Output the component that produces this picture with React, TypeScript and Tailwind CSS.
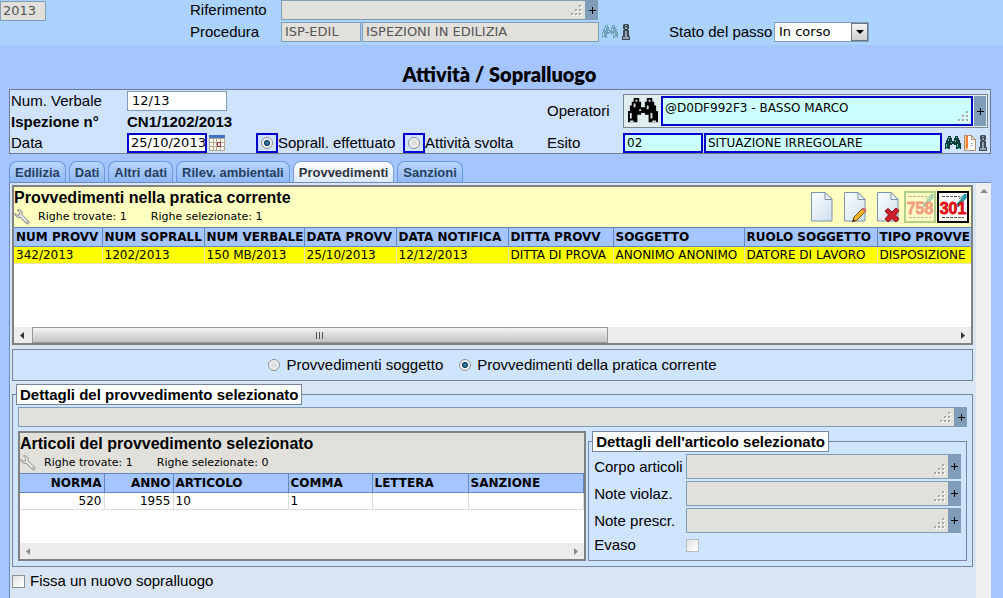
import React from "react";

const SANS = "font-['Liberation_Sans',Arial,sans-serif]";
const VERD = "font-['DejaVu_Sans',Verdana,sans-serif]";

function Grip() {
  return (
    <svg width="12" height="12" viewBox="0 0 12 12" className="pointer-events-none absolute right-1 bottom-1" aria-hidden="true">
      <g fill="#fff">
        <path d="M10 2h2v2h-2zM6 6h2v2H6zM10 6h2v2h-2zM2 10h2v2H2zM6 10h2v2H6zM10 10h2v2h-2z" />
      </g>
      <g fill="#a5a8a5">
        <path d="M9 1h2v2H9zM5 5h2v2H5zM9 5h2v2H9zM1 9h2v2H1zM5 9h2v2H5zM9 9h2v2H9z" />
      </g>
    </svg>
  );
}

function PlusButton({ label }: { label: string }) {
  return (
    <button type="button" aria-label={label} className="flex w-3 shrink-0 items-center justify-center bg-[#7f9db9]">
      <svg width="7" height="7" viewBox="0 0 7 7" aria-hidden="true">
        <path d="M3 0h1v3h3v1H4v3H3V4H0V3h3z" fill="#000" />
      </svg>
    </button>
  );
}

function GrayArea({ id, label, tall }: { id: string; label: string; tall?: boolean }) {
  return (
    <div className={"flex w-full " + (tall ? "h-[25px]" : "h-5")}>
      <div className="relative flex min-w-0 flex-1">
        <textarea
          id={id}
          aria-label={label}
          readOnly
          className="block h-full w-full resize-none overflow-hidden border border-[#7f9db9] bg-[#e1e0db] px-1 text-[12px]"
        />
        <Grip />
      </div>
      <PlusButton label={"Espandi " + label} />
    </div>
  );
}

function Binoculars({ size, body, shine }: { size: number; body: string; shine: string }) {
  return (
    <svg width={size} height={size} viewBox="0 0 16 16" aria-hidden="true">
      <path
        d="M3 1h3v2h1v3h2V3h1V1h3v2h1v2h1v3h1v6h-5v-4H9V9H7v1H5v4H0V8h1V5h1V3h1z"
        fill={body}
      />
      <path d="M4 2h1v1H4zM3 4h1v2H3zM1 9h1v3H1zM11 2h1v1h-1zM10 5h1v2h-1zM12 9h1v3h-1zM6 7h1v1H6zM1 13h2v1H1zM13 13h2v1h-2z" fill={shine} />
    </svg>
  );
}

function InfoIcon() {
  return (
    <svg width="10" height="16" viewBox="0 0 10 16" aria-hidden="true">
      <path d="M3 0h4l1 1v4H7v1h1v6h1v4H1v-4h1V6h1V5H2V1z" fill="#3e4a55" />
      <path d="M4 1h2v1H4zM4 3h2v2H4zM4 7h2v6h2v2H2v-2h2z" fill="#8fa3b3" />
    </svg>
  );
}

function Wrench({ faded }: { faded?: boolean }) {
  return (
    <svg width="16" height="16" viewBox="0 0 16 16" className={faded ? "opacity-80" : ""} aria-hidden="true">
      <path
        d="M3.500.8c2.400-.6 4.700.9 4.800 3.500l-.3 1.300 6.800 6.900c.8 1.600-.9 3-2.300 2.200L6 8c-2.500.9-5-.7-5.200-3.500l2.300 1.800 2.200-.6.500-2.200z"
        fill="#e6e6e6"
        stroke="#7d7d7d"
      />
      <circle cx="13" cy="13" r=".8" fill="#777" />
    </svg>
  );
}

function Page({ children }: { children?: React.ReactNode }) {
  return (
    <svg width="24" height="32" viewBox="0 0 24 32" aria-hidden="true">
      <defs>
        <linearGradient id="sheet" x1="0" y1="0" x2="1" y2="1">
          <stop offset="0" stopColor="#fbfdff" />
          <stop offset="1" stopColor="#cfe0ee" />
        </linearGradient>
      </defs>
      <path d="M1.500 1.500h13.500l7 7v21.500h-20.500z" fill="url(#sheet)" stroke="#7d94ab" />
      <path d="M15 1.500v7h7z" fill="#eef5fb" stroke="#7d94ab" />
      {children}
    </svg>
  );
}

function Stamp({ text, faded }: { text: string; faded?: boolean }) {
  return (
    <svg width="32" height="32" viewBox="0 0 32 32" className={faded ? "opacity-40" : ""} aria-hidden="true">
      <rect x="1" y="1" width="30" height="30" fill={faded ? "#fff8d0" : "#fff"} stroke={faded ? "#3c8c3c" : "#000"} strokeWidth="2" />
      <path d="M5 5.500h18M5 26.500h22" stroke="#555" strokeDasharray="3 1" />
      <path d="M19 14l10-11v4l-8 9zM22 8l6-5" fill="#2aa0a8" stroke="#0f7f88" />
      <text
        x="16"
        y="23"
        textAnchor="middle"
        fontSize="16"
        fontWeight="700"
        fill="#dd1018"
        stroke="#dd1018"
        strokeWidth="0.8"
        fontFamily="'Liberation Sans',sans-serif"
      >
        {text}
      </text>
    </svg>
  );
}

function Arrow({ dir, color }: { dir: "left" | "right" | "up"; color: string }) {
  const d = { left: "M5 1v7L1 4.500z", right: "M3 1v7l4-3.500z", up: "M0 6h8L4 2z" }[dir];
  return (
    <svg width="8" height="9" viewBox="0 0 8 9" aria-hidden="true">
      <path d={d} fill={color} />
    </svg>
  );
}

function HScroll({ thumb }: { thumb?: boolean }) {
  const c = thumb ? "#333" : "#8a8a8a";
  return (
    <div className="flex h-4 shrink-0 bg-[#ececec]">
      <button type="button" aria-label="Scorri a sinistra" className="flex w-[18px] items-center justify-center">
        <Arrow dir="left" color={c} />
      </button>
      <div className="flex flex-1">
        {thumb && (
          <div className="flex w-[62.5%] items-center justify-center gap-[2px] border border-[#979797] bg-linear-to-b from-[#f3f3f3] to-[#c4c4c6]">
            <span className="h-[7px] w-px bg-[#555]" />
            <span className="h-[7px] w-px bg-[#555]" />
            <span className="h-[7px] w-px bg-[#555]" />
          </div>
        )}
      </div>
      <button type="button" aria-label="Scorri a destra" className="flex w-[18px] items-center justify-center">
        <Arrow dir="right" color={c} />
      </button>
    </div>
  );
}

const radioClass =
  "h-3 w-3 shrink-0 appearance-none rounded-full border border-[#8e8f8f] bg-[radial-gradient(circle,#d4d4d4_0,#f4f4f4_70%)] checked:bg-[radial-gradient(circle,#3fa0c4_0,#123c5c_38%,#eef2f4_48%)]";

const checkClass = "h-[13px] w-[13px] shrink-0 appearance-none border bg-linear-to-br from-[#e4e4e4] to-white";

const tabs = ["Edilizia", "Dati", "Altri dati", "Rilev. ambientali", "Provvedimenti", "Sanzioni"];

const provv = [
  ["NUM PROVV", "342/2013"],
  ["NUM SOPRALL", "1202/2013"],
  ["NUM VERBALE", "150 MB/2013"],
  ["DATA PROVV", "25/10/2013"],
  ["DATA NOTIFICA", "12/12/2013"],
  ["DITTA PROVV", "DITTA DI PROVA"],
  ["SOGGETTO", "ANONIMO ANONIMO"],
  ["RUOLO SOGGETTO", "DATORE DI LAVORO"],
  ["TIPO PROVVE", "DISPOSIZIONE"],
];

const articoli = [
  ["NORMA", "520"],
  ["ANNO", "1955"],
  ["ARTICOLO", "10"],
  ["COMMA", "1"],
  ["LETTERA", ""],
  ["SANZIONE", ""],
];

function Counts({ found, selected }: { found: number; selected: number }) {
  return (
    <div className={"flex items-center text-[11px] leading-4 " + VERD}>
      <span>Righe trovate: {found}</span>
      <span className="ml-6">Righe selezionate: {selected}</span>
    </div>
  );
}

export default function App() {
  return (
    <div className={"flex min-h-screen flex-col bg-[#a4c5ff] text-[15px] leading-5 text-black " + SANS}>
      <header className="flex h-[45px] items-start bg-[#acd2ff]">
        <input
          aria-label="Anno"
          readOnly
          value="2013"
          className={"mt-px h-5 w-[46px] border border-[#7f9db9] bg-[#e1e0db] pl-[2px] text-[13px] text-[#555] " + VERD}
        />
        <div className="ml-36 grid grid-cols-[91px_auto] gap-y-[2px]">
          <label htmlFor="rif">Riferimento</label>
          <div className="w-[317px]">
            <GrayArea id="rif" label="Riferimento" />
          </div>
          <label htmlFor="proc">Procedura</label>
          <div className="flex items-center">
            <input
              id="proc"
              readOnly
              value="ISP-EDIL"
              className={"h-5 w-20 border border-[#7f9db9] bg-[#e1e0db] px-[3px] text-[13px] text-[#555] " + VERD}
            />
            <input
              aria-label="Descrizione procedura"
              readOnly
              value="ISPEZIONI IN EDILIZIA"
              className={"ml-px h-5 w-[237px] border border-[#7f9db9] bg-[#e1e0db] px-[3px] text-[13px] text-[#555] " + VERD}
            />
            <button type="button" aria-label="Cerca procedura" className="ml-[3px]">
              <Binoculars size={16} body="#6fa3bf" shine="#c3e2f2" />
            </button>
            <button type="button" aria-label="Informazioni procedura" className="ml-[3px]">
              <InfoIcon />
            </button>
            <label htmlFor="stato" className="mr-1 ml-[38px] w-[101px] whitespace-nowrap">
              Stato del passo
            </label>
            <div className="relative">
              <select
                id="stato"
                className={"block h-5 w-[95px] appearance-none border border-[#7f9db9] bg-white pl-1 text-[13px] leading-4 " + VERD}
              >
                <option>In corso</option>
              </select>
              <span className="pointer-events-none absolute top-px right-px flex h-[18px] w-[17px] items-center justify-center border border-[#6b7784] bg-linear-to-b from-[#f5f5f5] to-[#cfcfcf]">
                <svg width="8" height="4" viewBox="0 0 8 4" aria-hidden="true">
                  <path d="M0 0h8L4 4z" />
                </svg>
              </span>
            </div>
          </div>
        </div>
      </header>

      <h1 className="mt-[17px] mb-[3px] pr-1 text-center font-['Lato',sans-serif] text-[20px] leading-6 font-extrabold">Attività / Sopralluogo</h1>

      <section className="mr-3 ml-[9px] flex border border-[#6f7d90] bg-[#cfe3ff]">
        <div className="w-[537px] shrink-0 pl-px">
          <div className="flex h-[21px] items-center">
            <label htmlFor="verb" className="w-[116px]">
              Num. Verbale
            </label>
            <input id="verb" defaultValue="12/13" className={"h-5 w-[100px] border border-[#7f9db9] bg-white px-1 text-[13px] " + VERD} />
          </div>
          <div className="flex h-[21px] items-center font-bold">
            <span className="w-[116px]">Ispezione n°</span>
            <span className="text-[15px]">CN1/1202/2013</span>
          </div>
          <div className="flex h-[21px] items-center">
            <label htmlFor="data" className="w-[116px]">
              Data
            </label>
            <input
              id="data"
              defaultValue="25/10/2013"
              className={"h-5 w-20 border-2 border-[#0000c8] bg-white pl-[2px] text-[13px] " + VERD}
            />
            <button type="button" aria-label="Calendario" className="ml-[2px]">
              <svg width="16" height="16" viewBox="0 0 16 16" aria-hidden="true">
                <path d="M0 0h16v16H0z" fill="#b9a884" />
                <path d="M0 0h16v3H0z" fill="#3f74c8" />
                <path d="M1 4h3v3H1zM5 4h2v3H5zM8 4h3v3H8zM12 4h3v3h-3zM1 8h3v3H1zM5 8h2v3H5zM12 8h3v3h-3zM1 12h3v3H1zM5 12h2v3H5zM8 12h3v3H8zM12 12h3v3h-3z" fill="#fff" />
                <path d="M8 7h4v5H8z" fill="#a03050" />
                <path d="M9 8h2v3H9z" fill="#fff" />
              </svg>
            </button>
            <span className="ml-[31px] flex h-5 w-[22px] items-center justify-center border-2 border-[#0000c8]">
              <input id="r1" type="radio" name="att" defaultChecked className={radioClass} />
            </span>
            <label htmlFor="r1" className="w-[125px] whitespace-nowrap">
              Soprall. effettuato
            </label>
            <span className="flex h-5 w-[22px] items-center justify-center border-2 border-[#0000c8]">
              <input id="r2" type="radio" name="att" className={radioClass} />
            </span>
            <label htmlFor="r2">Attività svolta</label>
          </div>
        </div>
        <div className="flex min-w-0 flex-1 flex-col pr-[2px]">
          <div className="flex h-[42px] items-center">
            <label htmlFor="oper" className="w-19 shrink-0">
              Operatori
            </label>
            <div className="flex h-[34px] flex-1 border border-[#7c8792] bg-[#e0efee] p-px">
              <button type="button" aria-label="Cerca operatori" className="flex w-9 shrink-0 items-center justify-center">
                <Binoculars size={30} body="#000" shine="#d8e2e2" />
              </button>
              <div className="relative flex min-w-0 flex-1">
                <textarea
                  id="oper"
                  defaultValue="@D0DF992F3 - BASSO MARCO"
                  className={"block h-full w-full resize-none overflow-hidden border-2 border-[#0000c8] bg-[#ccffff] px-[2px] pt-[2px] text-[12px] leading-4 " + VERD}
                />
                <Grip />
              </div>
              <span className="ml-px flex">
                <PlusButton label="Espandi operatori" />
              </span>
            </div>
          </div>
          <div className="flex h-[21px] items-center">
            <label htmlFor="esito" className="w-19 shrink-0">
              Esito
            </label>
            <input id="esito" defaultValue="02" className={"h-5 w-20 border-2 border-[#0000c8] bg-[#ccffff] px-[2px] text-[12px] " + VERD} />
            <input
              aria-label="Descrizione esito"
              defaultValue="SITUAZIONE IRREGOLARE"
              className={"ml-px h-5 min-w-0 flex-1 border-2 border-[#0000c8] bg-[#ccffff] px-[2px] text-[12px] " + VERD}
            />
            <button type="button" aria-label="Cerca esito" className="ml-[3px]">
              <Binoculars size={16} body="#0d3d3f" shine="#3fd0b0" />
            </button>
            <button type="button" aria-label="Modifica esito" className="ml-[2px]">
              <svg width="14" height="16" viewBox="0 0 14 16" aria-hidden="true">
                <path d="M1.500.5h7l4 4v11h-11z" fill="#fff" stroke="#b09070" />
                <path d="M8.500.5v4h4z" fill="#f0e4d8" stroke="#b09070" />
                <path d="M2 1h3v11l-1.500 3L2 12z" fill="#f08030" />
                <path d="M2 1h1v11H2z" fill="#ffc090" />
                <path d="M8 8h2v1H8zM8 10h2v1H8z" fill="#aaa" />
              </svg>
            </button>
            <button type="button" aria-label="Informazioni esito" className="ml-px">
              <InfoIcon />
            </button>
          </div>
        </div>
      </section>

      <div role="tablist" className="mt-[7px] ml-[9px] flex h-[21px] gap-[3px]">
        {tabs.map((t) => {
          const on = t === "Provvedimenti";
          return (
            <button
              key={t}
              type="button"
              role="tab"
              aria-selected={on}
              className={
                "rounded-t-lg border border-b-0 px-[5px] pt-px text-[13px] font-bold whitespace-nowrap " +
                (on ? "border-[#7a9fd8] bg-linear-to-b from-white to-[#dde8f8] text-[#303440]" : "border-[#6a98e0] bg-linear-to-b from-[#b8d6ff] to-[#8fb7f4] text-[#25405f]")
              }
            >
              {t}
            </button>
          );
        })}
      </div>

      <main className="mr-3 ml-[9px] flex flex-1 border-t border-l border-[#6a8cc0] bg-[#dae5f4]">
        <div className="flex min-w-0 flex-1 flex-col pt-[2px] pr-[3px] pl-[2px]">
          <section className="border-2 border-[#7f8280] bg-white">
            <div className="flex h-10 justify-between bg-[#ffffc0]">
              <div>
                <h2 className="pt-px text-[16px] leading-5 font-bold">Provvedimenti nella pratica corrente</h2>
                <div className="mt-px flex items-center gap-2">
                  <button type="button" aria-label="Impostazioni provvedimenti">
                    <Wrench />
                  </button>
                  <Counts found={1} selected={1} />
                </div>
              </div>
              <div className="flex items-center pr-[2px]">
                <button type="button" aria-label="Nuovo">
                  <Page />
                </button>
                <button type="button" aria-label="Modifica" className="ml-[9px]">
                  <Page>
                    <path d="M9.500 31l1.500-5 9-9 3 3-9 9z" fill="#f0b428" stroke="#7a5410" />
                    <path d="M9.500 31l1-3 2 2z" fill="#333" />
                    <path d="M19 18l2-1.500 2.500 2.500-1.500 2z" fill="#d86070" />
                  </Page>
                </button>
                <button type="button" aria-label="Elimina" className="ml-[9px]">
                  <Page>
                    <path d="M9 20l3-2.500 4 3.500 4-4 3 2.500-3.500 4.500 3.500 4-3 3-4-3.500-4 3.500-3-3 3.500-4z" fill="#cc1f2c" stroke="#8a1018" />
                  </Page>
                </button>
                <button type="button" aria-label="Stampa 758" className="ml-[4px]">
                  <Stamp text="758" faded />
                </button>
                <button type="button" aria-label="Stampa 301" className="ml-px">
                  <Stamp text="301" />
                </button>
              </div>
            </div>
            <div className="h-[100px] overflow-hidden">
              <table className={"w-[1050px] table-fixed border-collapse text-[12px] leading-4 whitespace-nowrap " + VERD}>
                <colgroup>
                  <col className="w-[88px]" />
                  <col className="w-[102px]" />
                  <col className="w-[100px]" />
                  <col className="w-[92px]" />
                  <col className="w-[112px]" />
                  <col className="w-[105px]" />
                  <col className="w-[131px]" />
                  <col className="w-[133px]" />
                  <col />
                </colgroup>
                <thead>
                  <tr className="h-[19px] bg-[#a4c5ff]">
                    {provv.map(([h]) => (
                      <th key={h} className="border-y border-r border-[#6288c4] p-0 pl-[2px] text-left font-bold">
                        {h}
                      </th>
                    ))}
                  </tr>
                </thead>
                <tbody>
                  <tr className="h-[17px] bg-[#ffff00]">
                    {provv.map(([h, v]) => (
                      <td key={h} className="border-r border-b border-[#e6e6b0] p-0 pl-[2px]">
                        {v}
                      </td>
                    ))}
                  </tr>
                </tbody>
              </table>
            </div>
            <HScroll thumb />
          </section>

          <div className="mt-1 flex h-8 items-center justify-center border border-[#76859a] bg-[#cfe4ff]">
            <input id="p1" type="radio" name="prov" className={radioClass} />
            <label htmlFor="p1" className="ml-[6px]">
              Provvedimenti soggetto
            </label>
            <input id="p2" type="radio" name="prov" defaultChecked className={radioClass + " ml-4"} />
            <label htmlFor="p2" className="ml-[6px]">
              Provvedimenti della pratica corrente
            </label>
          </div>

          <fieldset className="mt-[3px] min-w-0 border border-[#76859a] bg-[#cfe4ff] px-[5px] pb-[5px]">
            <legend className="-ml-[2px] border border-[#76859a] bg-white px-[3px] leading-[19px] font-bold">Dettagli del provvedimento selezionato</legend>
            <div className="mt-[2px]">
              <GrayArea id="dett" label="Dettagli del provvedimento" />
            </div>
            <div className="mt-1 grid grid-cols-[3fr_2fr] gap-[2px]">
              <section className="flex min-w-0 flex-col border-2 border-[#7f8280] bg-white">
                <div className="h-10 bg-[#e1e0db]">
                  <h2 className="pt-px text-[16px] leading-5 font-bold">Articoli del provvedimento selezionato</h2>
                  <div className="mt-px flex items-center gap-2">
                    <button type="button" aria-label="Impostazioni articoli">
                      <Wrench faded />
                    </button>
                    <Counts found={1} selected={0} />
                  </div>
                </div>
                <div className="flex-1">
                  <table className={"w-full table-fixed border-collapse text-[12px] leading-4 " + VERD}>
                    <colgroup>
                      <col className="w-[84px]" />
                      <col className="w-[69px]" />
                      <col className="w-[115px]" />
                      <col className="w-[84px]" />
                      <col className="w-[96px]" />
                      <col />
                    </colgroup>
                    <thead>
                      <tr className="h-[19px] bg-[#a4c5ff]">
                        {articoli.map(([h], i) => (
                          <th key={h} className={"border-y border-r border-[#6288c4] p-0 px-[2px] font-bold " + (i < 2 ? "text-right" : "text-left")}>
                            {h}
                          </th>
                        ))}
                      </tr>
                    </thead>
                    <tbody>
                      <tr className="h-[17px]">
                        {articoli.map(([h, v], i) => (
                          <td key={h} className={"border-r border-b border-[#dcdcdc] p-0 px-[2px] " + (i < 2 ? "text-right" : "text-left")}>
                            {v}
                          </td>
                        ))}
                      </tr>
                    </tbody>
                  </table>
                </div>
                <HScroll />
              </section>
              <fieldset className="min-w-0 border border-[#76859a] px-[5px] pb-[5px]">
                <legend className="-ml-[2px] border border-[#76859a] bg-white px-[3px] leading-[19px] font-bold">Dettagli dell'articolo selezionato</legend>
                <div className="mt-[2px] grid grid-cols-[92px_1fr] items-center gap-y-[2px]">
                  <label htmlFor="corpo">Corpo articoli</label>
                  <GrayArea id="corpo" label="Corpo articoli" tall />
                  <label htmlFor="viol">Note violaz.</label>
                  <GrayArea id="viol" label="Note violaz." tall />
                  <label htmlFor="prescr">Note prescr.</label>
                  <GrayArea id="prescr" label="Note prescr." tall />
                  <label htmlFor="evaso">Evaso</label>
                  <input id="evaso" type="checkbox" className={checkClass + " border-[#b4bcc4]"} />
                </div>
              </fieldset>
            </div>
          </fieldset>

          <div className="mt-1 flex items-center gap-[5px]">
            <input id="fissa" type="checkbox" className={checkClass + " border-[#8e8f8f]"} />
            <label htmlFor="fissa">Fissa un nuovo sopralluogo</label>
          </div>
        </div>
        <div className="flex w-[15px] shrink-0 flex-col bg-[#f0eff0]">
          <button type="button" aria-label="Scorri in alto" className="flex h-[17px] items-center justify-center">
            <Arrow dir="up" color="#8a8a8a" />
          </button>
        </div>
      </main>
    </div>
  );
}
